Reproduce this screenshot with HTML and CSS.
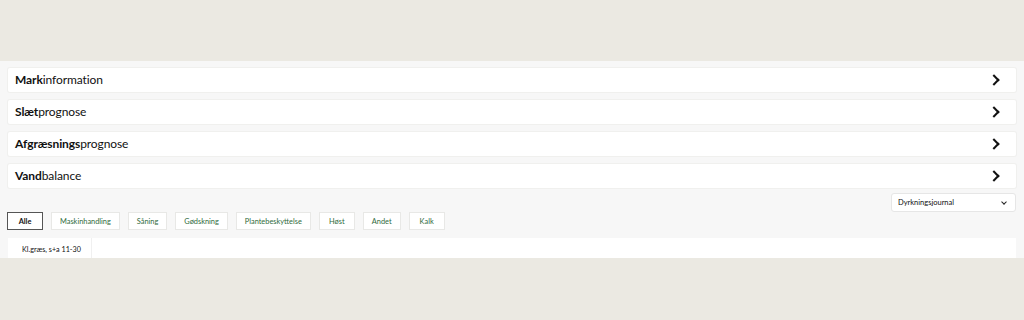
FILE: index.html
```html
<!DOCTYPE html>
<html lang="da">
<head>
    <meta charset="UTF-8">
    <title>Mark</title>
    <link rel="stylesheet" href="styles.css">
</head>
<body>
    <div class="page">
        <div class="row"><span><b>Mark</b>information</span><span class="chev"></span></div>
        <div class="row"><span><b>Slæt</b>prognose</span><span class="chev"></span></div>
        <div class="row"><span><b>Afgræsnings</b>prognose</span><span class="chev"></span></div>
        <div class="row"><span><b>Vand</b>balance</span><span class="chev"></span></div>

        <div class="tools">
            <div class="select">Dyrkningsjournal<span class="arrow"></span></div>
        </div>

        <div class="filters">
            <button class="active">Alle</button>
            <button>Maskinhandling</button>
            <button>Såning</button>
            <button>Gødskning</button>
            <button>Plantebeskyttelse</button>
            <button>Høst</button>
            <button>Andet</button>
            <button>Kalk</button>
        </div>

        <div class="panel">
            <div class="tab">Kl.græs, s+a 11-30</div>
        </div>
    </div>
</body>
</html>
```

FILE: styles.css
```css
body {
    margin: 0;
    height: 320px;
    background: #ebe9e2;
    font-family: Lato, "Open Sans", sans-serif;
    overflow: hidden;
}
.page {
    margin-top: 61px;
    height: 190px;
    padding: 7px 8px 0 8px;
    background: #f7f7f7;
    overflow: hidden;
}
.row {
    display: flex;
    justify-content: space-between;
    align-items: center;
    height: 24px;
    margin-bottom: 8px;
    padding: 0 16px 1px 7px;
    box-sizing: border-box;
    background: #fff;
    border-radius: 2px;
    box-shadow: 0 0 0 1px #f0f0ee;
    font-size: 12px;
    letter-spacing: -0.1px;
    color: #111;
}
.row b {
    font-weight: 700;
}
.chev {
    width: 6px;
    height: 6px;
    margin-right: 2px;
    border-top: 2px solid #111;
    border-right: 2px solid #111;
    transform: rotate(45deg);
}
.tools {
    display: flex;
    justify-content: flex-end;
    margin-top: -3px;
}
.select {
    display: flex;
    justify-content: space-between;
    align-items: center;
    box-sizing: border-box;
    width: 125px;
    height: 19px;
    padding: 0 9px 0 6px;
    background: #fff;
    border: 1px solid #e6e6e6;
    border-radius: 3px;
    font-size: 7.5px;
    color: #111;
}
.arrow {
    width: 3px;
    height: 3px;
    margin-bottom: 2px;
    border-bottom: 1px solid #222;
    border-right: 1px solid #222;
    transform: rotate(45deg);
}
.filters {
    display: flex;
    gap: 8px;
    margin-left: -1px;
}
.filters button {
    min-width: 36px;
    height: 18px;
    margin: 0;
    padding: 0 8px;
    background: #fff;
    border: 1px solid #e8e8e6;
    font-family: Lato, sans-serif;
    font-size: 7.4px;
    color: #2f6b3c;
}
.filters button.active {
    border-color: #555;
    color: #111;
    font-weight: 700;
}
.panel {
    display: flex;
    margin-top: 8px;
    height: 30px;
    background: #fff;
}
.tab {
    width: 69px;
    padding: 7px 0 0 14px;
    border-right: 1px solid #f0f0f0;
    font-size: 7.2px;
    color: #111;
}
```
